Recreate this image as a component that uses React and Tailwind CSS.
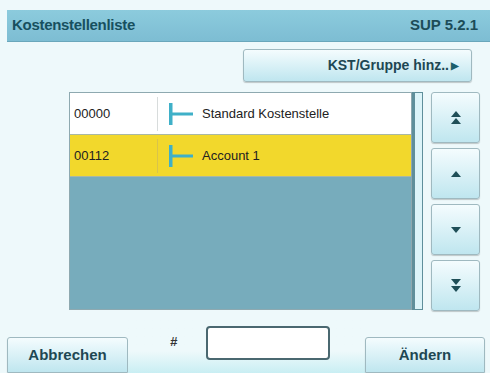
import { useState } from 'react';

const rows = [
  { code: '00000', name: 'Standard Kostenstelle' },
  { code: '00112', name: 'Account 1' },
];

function TreeMark() {
  return (
    <svg width="26" height="26" viewBox="0 0 26 26" className="shrink-0">
      <rect x="1" y="2" width="3.5" height="22" fill="#3fb0c8" />
      <rect x="4" y="11.5" width="21" height="3" fill="#3fb0c8" />
    </svg>
  );
}

function Arrow({ kind }) {
  const up = kind === 'top' || kind === 'up';
  const dbl = kind === 'top' || kind === 'bottom';
  const tri = (y) =>
    up ? `M3 ${y + 6} L8 ${y} L13 ${y + 6} Z` : `M3 ${y} L8 ${y + 6} L13 ${y} Z`;
  return (
    <svg width="16" height="16" viewBox="0 0 16 16">
      {dbl ? (
        <>
          <path d={tri(1)} fill="#1f4f58" />
          <path d={tri(8)} fill="#1f4f58" />
        </>
      ) : (
        <path d={tri(5)} fill="#1f4f58" />
      )}
    </svg>
  );
}

const btn =
  'bg-gradient-to-b from-[#f4fcfe] to-[#bfe6ef] border border-[#9fb9c0] rounded-[3px] shadow-[0_1px_1px_rgba(0,0,0,0.2)] text-[#1e4753] font-bold';

export default function App() {
  const [selected, setSelected] = useState(1);

  return (
    <div
      className="w-[490px] h-[373px] bg-[#eef9fb] flex flex-col overflow-hidden"
      style={{ fontFamily: '"Liberation Sans", Arial, sans-serif' }}
    >
      <div className="mt-[10px] ml-[7px] h-[32px] flex items-center justify-between pl-[5px] pr-[12px] bg-gradient-to-b from-[#8ccbdd] to-[#7dbdd3] border-b border-[#6aa7bb]">
        <span className="text-[15px] font-bold text-[#17505f] tracking-[-0.3px]">Kostenstellenliste</span>
        <span className="text-[15px] font-bold text-[#1c4c58]">SUP 5.2.1</span>
      </div>

      <div className="flex justify-end pr-[18px] mt-[7px]">
        <button className={`${btn} w-[229px] h-[33px] flex items-center justify-end pr-[12px] text-[14px] gap-[2px]`}>
          KST/Gruppe hinz..
          <span className="text-[10px] text-[#1b5f6c]">▶</span>
        </button>
      </div>

      <div className="flex mt-[10px]">
        <div className="ml-[69px] w-[343px] h-[218px] bg-[#77acbc] border border-[#8ea9b0] flex flex-col">
          {rows.map((r, i) => (
            <div
              key={r.code}
              onClick={() => setSelected(i)}
              className={`h-[42px] flex items-center border-b border-[#a9b8a4] ${
                selected === i ? 'bg-[#f2d82c]' : 'bg-white'
              }`}
            >
              <span className="w-[87px] pl-[4px] text-[13px] text-[#222]">{r.code}</span>
              <div className={`w-px h-[34px] ${selected === i ? 'bg-[#d9c44a]' : 'bg-[#d8dcdc]'}`} />
              <div className="ml-[10px]">
                <TreeMark />
              </div>
              <span className="ml-[8px] text-[13px] text-[#222]">{r.name}</span>
            </div>
          ))}
        </div>
        <div className="w-[11px] h-[218px] bg-[#dcf4f9] border border-[#5f8f9b] border-l-[3px]" />
        <div className="ml-[8px] flex flex-col gap-[5px]">
          {['top', 'up', 'down', 'bottom'].map((k) => (
            <button key={k} className={`${btn} w-[49px] h-[51px] flex items-center justify-center`}>
              <Arrow kind={k} />
            </button>
          ))}
        </div>
      </div>

      <div className="flex items-end mt-auto h-[55px]">
        <button className={`${btn} ml-[7px] w-[121px] h-[36px] text-[15px] rounded-b-none`}>Abbrechen</button>
        <div className="flex-1 h-full flex items-start bg-gradient-to-b from-[#eef9fb] from-60% to-[#c9eef3]">
          <span className="ml-[42px] mt-[14px] text-[13px] font-bold italic text-[#333]">#</span>
          <div className="ml-[29px] mt-[8px] w-[124px] h-[34px] bg-white border-2 border-[#4a6870] rounded-[4px]" />
        </div>
        <button className={`${btn} mr-[5px] w-[120px] h-[36px] text-[15px] rounded-b-none`}>Ändern</button>
      </div>
    </div>
  );
}
